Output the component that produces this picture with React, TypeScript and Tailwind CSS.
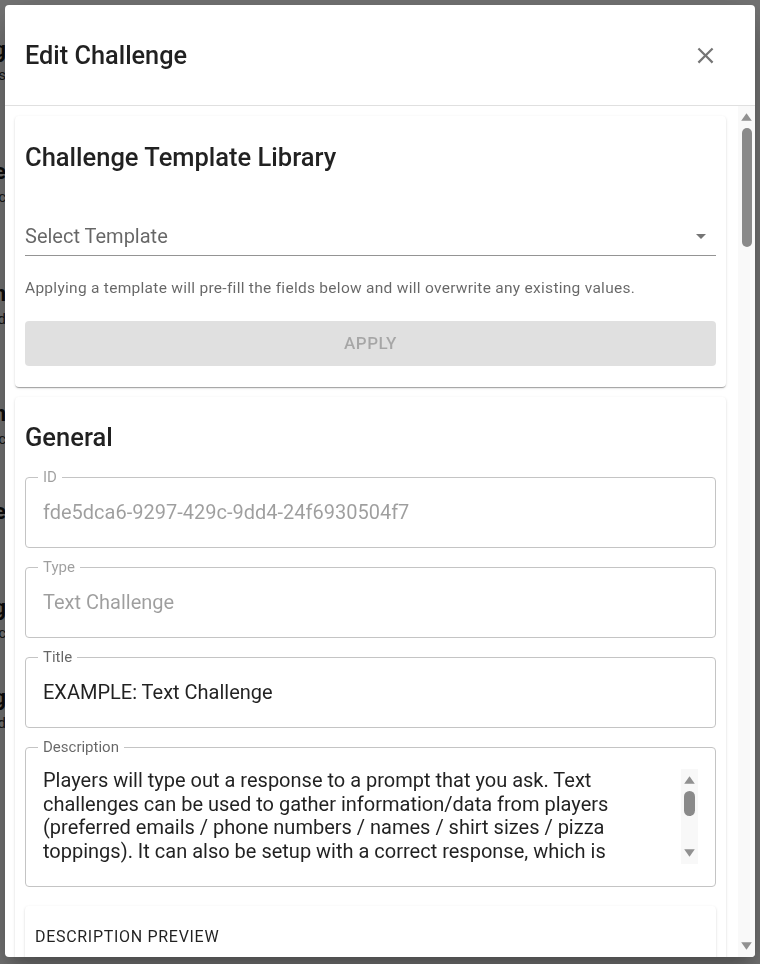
const paperShadow =
  'shadow-[0px_2px_1px_-1px_rgba(0,0,0,0.2),0px_1px_1px_0px_rgba(0,0,0,0.14),0px_1px_3px_0px_rgba(0,0,0,0.12)]';

const description =
  'Players will type out a response to a prompt that you ask. Text challenges can be used to gather information/data from players (preferred emails / phone numbers / names / shirt sizes / pizza toppings). It can also be setup with a correct response, which is automatically checked when the player submits their answer. Use this for riddles, trivia questions, passwords or any challenge where players must type a specific word or phrase to complete it. Responses are not case sensitive, and you can add multiple accepted answers separated by commas. Players who answer correctly are awarded the points below.';

// the list page that sits behind the dialog, only its left edge peeks out
function BackgroundPage() {
  const rows = [
    { title: 'Team Building', sub: 'Icebreakers', mt: 'mt-[36px]' },
    { title: 'Scavenger Race', sub: 'Photo topic', mt: 'mt-[72px]' },
    { title: 'Trivia Lunch Run', sub: 'Ten rounds held', mt: 'mt-[72px]' },
    { title: 'Campus Walk Tour Run', sub: 'Map and clue basic', mt: 'mt-[70px]' },
    { title: 'Final Puzzle Case', sub: '', mt: 'mt-[48px]' },
    { title: 'Closing Meeting', sub: 'Wrap up topic', mt: 'mt-[68px]' },
    { title: 'Bonus Rating', sub: 'Extra board', mt: 'mt-[40px]' },
  ];
  return (
    <div className="flex w-[6px] flex-col overflow-hidden">
      {rows.map((r) => (
        <div key={r.title} className={`${r.mt} flex flex-col`}>
          <div className="flex justify-end">
            <span className="whitespace-nowrap text-[22px] font-bold leading-[28px] text-[#1a1a1a]">{r.title}</span>
          </div>
          {r.sub && (
            <div className="flex justify-end">
              <span className="whitespace-nowrap text-[15px] leading-[22px] text-[#333]">{r.sub}</span>
            </div>
          )}
        </div>
      ))}
    </div>
  );
}

// classic windows-style scrollbar, drawn since the page's own are hidden
function ScrollBar({ thumb, track }: { thumb: string; track: string }) {
  return (
    <div className={`flex w-[17px] shrink-0 flex-col items-center ${track}`}>
      <div className="flex h-[22px] w-full items-center justify-center">
        <svg viewBox="0 0 11 8" className="h-[8px] w-[11px] fill-[#919191]">
          <path d="M5.5 0.3 10.8 7.7H0.2z" />
        </svg>
      </div>
      <div className={`w-[10px] rounded-full bg-[#8a8a8a] ${thumb}`} />
      <div className="flex-1" />
      <div className="flex h-[22px] w-full items-center justify-center">
        <svg viewBox="0 0 11 8" className="h-[8px] w-[11px] fill-[#919191]">
          <path d="M5.5 7.7 10.8 0.3H0.2z" />
        </svg>
      </div>
    </div>
  );
}

function OutlinedField({
  label,
  value,
  disabled,
  className = '',
}: {
  label: string;
  value: string;
  disabled?: boolean;
  className?: string;
}) {
  return (
    <fieldset className={`min-w-0 rounded border border-[#c4c4c4] ${className}`}>
      <legend
        className={`ml-[12px] px-[5px] text-[15px] leading-[16px] ${
          disabled ? 'text-[rgba(0,0,0,0.38)]' : 'text-[rgba(0,0,0,0.6)]'
        }`}
      >
        {label}
      </legend>
      <input
        readOnly
        disabled={disabled}
        value={value}
        className={`mb-[8px] block h-[54px] w-full bg-transparent px-[17px] text-[20px] outline-none ${
          disabled ? 'text-[rgba(0,0,0,0.38)]' : 'text-[rgba(0,0,0,0.87)]'
        }`}
      />
    </fieldset>
  );
}

function SectionTitle({ children }: { children: React.ReactNode }) {
  return <h2 className="text-[25.5px] font-medium leading-[32px] text-[rgba(0,0,0,0.87)]">{children}</h2>;
}

export default function App() {
  return (
    <div className="relative h-[964px] overflow-hidden bg-white font-['Roboto',sans-serif]">
      <BackgroundPage />

      {/* backdrop + dialog */}
      <div className="fixed inset-0 flex bg-[rgba(0,0,0,0.55)] pb-[7px] pl-[5px] pr-[5px] pt-[5px]">
        <div className="flex flex-1 flex-col overflow-hidden rounded bg-white shadow-[0px_11px_15px_-7px_rgba(0,0,0,0.2),0px_24px_38px_3px_rgba(0,0,0,0.14),0px_9px_46px_8px_rgba(0,0,0,0.12)]">
          {/* header */}
          <div className="flex h-[101px] shrink-0 items-center justify-between border-b border-[#e0e0e0] pl-[20px] pr-[30px]">
            <h1 className="mt-[2px] text-[25.3px] font-medium leading-[32px] text-[rgba(0,0,0,0.87)]">Edit Challenge</h1>
            <button className="flex h-10 w-10 items-center justify-center rounded-full">
              <svg viewBox="0 0 24 24" className="h-[27px] w-[27px] fill-[#757575]">
                <path d="M19 6.41 17.59 5 12 10.59 6.41 5 5 6.41 10.59 12 5 17.59 6.41 19 12 13.41 17.59 19 19 17.59 13.41 12z" />
              </svg>
            </button>
          </div>

          {/* body */}
          <div className="flex min-h-0 flex-1">
            <div className="min-w-0 flex-1 overflow-hidden pl-[10px] pr-[12px] pt-[10px]">
              <div className="flex flex-col gap-[10px]">
                {/* template library */}
                <div className={`rounded bg-white px-[10px] pb-[21px] pt-[25px] ${paperShadow}`}>
                  <SectionTitle>Challenge Template Library</SectionTitle>
                  <div className="mt-[51px] flex items-center justify-between border-b border-[rgba(0,0,0,0.42)] pb-[7px]">
                    <span className="text-[20px] leading-[24px] text-[rgba(0,0,0,0.6)]">Select Template</span>
                    <svg viewBox="0 0 24 24" className="mr-[3px] h-6 w-6 fill-[#757575]">
                      <path d="M7 10l5 5 5-5z" />
                    </svg>
                  </div>
                  <p className="mt-[22px] text-[15.5px] leading-[20px] tracking-[0.28px] text-[rgba(0,0,0,0.6)]">
                    Applying a template will pre-fill the fields below and will overwrite any existing values.
                  </p>
                  <button
                    disabled
                    className="mt-[23px] flex h-[45px] w-full items-center justify-center rounded bg-[rgba(0,0,0,0.12)] text-[17px] font-medium tracking-[0.5px] text-[rgba(0,0,0,0.26)]"
                  >
                    APPLY
                  </button>
                </div>

                {/* general */}
                <div className={`rounded bg-white px-[10px] pb-[20px] pt-[24px] ${paperShadow}`}>
                  <SectionTitle>General</SectionTitle>
                  <OutlinedField className="mt-[16px]" label="ID" value="fde5dca6-9297-429c-9dd4-24f6930504f7" disabled />
                  <OutlinedField className="mt-[11px]" label="Type" value="Text Challenge" disabled />
                  <OutlinedField className="mt-[11px]" label="Title" value="EXAMPLE: Text Challenge" />

                  <fieldset className="mt-[11px] min-w-0 rounded border border-[#c4c4c4]">
                    <legend className="ml-[12px] px-[5px] text-[15px] leading-[16px] text-[rgba(0,0,0,0.6)]">
                      Description
                    </legend>
                    <div className="mb-[22px] ml-[17px] mr-[17px] mt-[14px] flex h-[95px]">
                      <textarea
                        readOnly
                        value={description}
                        className="min-w-0 flex-1 resize-none overflow-hidden bg-transparent text-[20px] leading-[23.6px] text-[rgba(0,0,0,0.87)] outline-none"
                      />
                      <ScrollBar track="bg-[#f8f8f8]" thumb="h-[25px] w-[11px]" />
                    </div>
                  </fieldset>

                  <div className={`mt-[19px] rounded bg-white px-[10px] pb-[20px] pt-[21px] ${paperShadow}`}>
                    <div className="text-[16px] leading-[20px] tracking-[0.7px] text-[rgba(0,0,0,0.87)]">DESCRIPTION PREVIEW</div>
                    <p className="mt-[12px] text-[18px] leading-[26px] text-[rgba(0,0,0,0.87)]">{description}</p>
                  </div>
                </div>

                {/* scoring */}
                <div className={`rounded bg-white px-[10px] pb-[20px] pt-[24px] ${paperShadow}`}>
                  <SectionTitle>Scoring</SectionTitle>
                  <OutlinedField className="mt-[16px]" label="Points" value="100" />
                  <OutlinedField className="mt-[11px]" label="Correct Response" value="" />
                </div>
              </div>
            </div>
            <ScrollBar track="bg-[#f9f9f9]" thumb="h-[119px]" />
          </div>
        </div>
      </div>
    </div>
  );
}
